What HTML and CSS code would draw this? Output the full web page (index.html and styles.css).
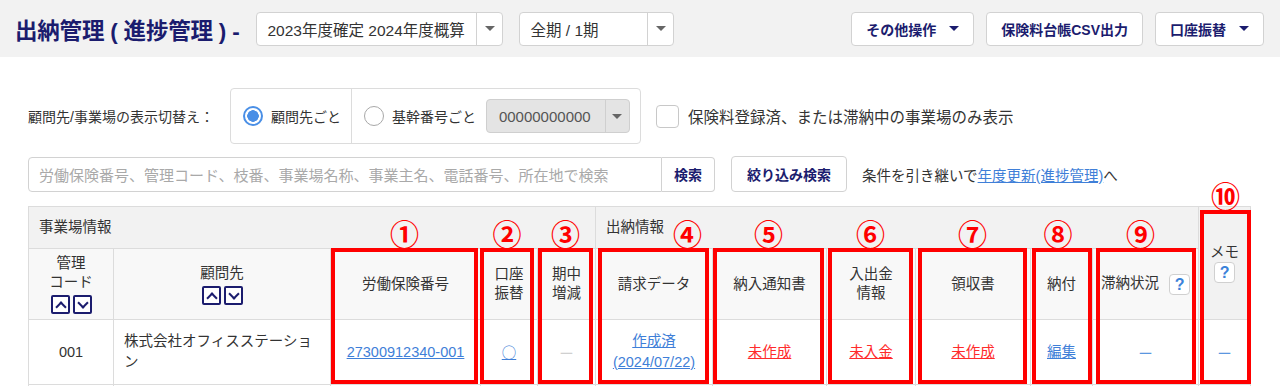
FILE: index.html
```html
<!DOCTYPE html>
<html lang="ja">
<head>
    <meta charset="UTF-8">
    <title>出納管理 (進捗管理)</title>
    <link rel="stylesheet" href="styles.css">
</head>
<body>
    <header class="topbar">
        <h1 class="page-title">出納管理 ( 進捗管理 ) -</h1>
        <div class="select year-select">
            <span class="select-text">2023年度確定 2024年度概算</span>
            <span class="select-arrow"><span class="caret"></span></span>
        </div>
        <div class="select term-select">
            <span class="select-text">全期 / 1期</span>
            <span class="select-arrow"><span class="caret"></span></span>
        </div>
        <div class="actions">
            <button class="btn">その他操作<span class="caret navy"></span></button>
            <button class="btn">保険料台帳CSV出力</button>
            <button class="btn">口座振替<span class="caret navy"></span></button>
        </div>
    </header>

    <main class="content">
        <div class="filter-row">
            <span class="filter-label">顧問先/事業場の表示切替え：</span>
            <div class="radio-box">
                <label class="radio-seg"><span class="radio checked"></span>顧問先ごと</label>
                <label class="radio-seg">
                    <span class="radio"></span>基幹番号ごと
                    <span class="select gray-select">
                        <span class="select-text">00000000000</span>
                        <span class="select-arrow"><span class="caret"></span></span>
                    </span>
                </label>
            </div>
            <label class="check"><span class="checkbox"></span>保険料登録済、または滞納中の事業場のみ表示</label>
        </div>

        <div class="search-row">
            <div class="search-group">
                <span class="search-input">労働保険番号、管理コード、枝番、事業場名称、事業主名、電話番号、所在地で検索</span>
                <button class="btn search-btn">検索</button>
            </div>
            <button class="btn narrow-btn">絞り込み検索</button>
            <span class="carry-text">条件を引き継いで<a href="#" class="link">年度更新(進捗管理)</a>へ</span>
        </div>

        <div class="table-wrap">
            <table class="grid">
                <colgroup>
                    <col class="w85"><col class="w217"><col class="w150"><col class="w57"><col class="w58">
                    <col class="w117"><col class="w114"><col class="w89"><col class="w115"><col class="w62">
                    <col class="w106"><col class="w52">
                </colgroup>
                <tr class="group-row">
                    <th colspan="5" class="group">事業場情報</th>
                    <th colspan="6" class="group">出納情報</th>
                    <th rowspan="2" class="memo-head">メモ<br><span class="help">?</span></th>
                </tr>
                <tr class="head-row">
                    <th>管理<br>コード<br>
                        <span class="sorts"><span class="sort up"></span><span class="sort down"></span></span>
                    </th>
                    <th>顧問先<br>
                        <span class="sorts"><span class="sort up"></span><span class="sort down"></span></span>
                    </th>
                    <th>労働保険番号</th>
                    <th>口座<br>振替</th>
                    <th>期中<br>増減</th>
                    <th>請求データ</th>
                    <th>納入通知書</th>
                    <th>入出金<br>情報</th>
                    <th>領収書</th>
                    <th>納付</th>
                    <th>滞納状況<span class="help gap">?</span></th>
                </tr>
                <tr class="data-row">
                    <td>001</td>
                    <td class="left">株式会社オフィスステーション</td>
                    <td><a href="#" class="link">27300912340-001</a></td>
                    <td><a href="#" class="link cjk">○</a></td>
                    <td class="muted cjk">ー</td>
                    <td><a href="#" class="link">作成済<br>(2024/07/22)</a></td>
                    <td><a href="#" class="link red">未作成</a></td>
                    <td><a href="#" class="link red">未入金</a></td>
                    <td><a href="#" class="link red">未作成</a></td>
                    <td><a href="#" class="link">編集</a></td>
                    <td class="blue-dash cjk">ー</td>
                    <td class="blue-dash cjk">ー</td>
                </tr>
                <tr class="data-row">
                    <td></td><td></td><td></td><td></td><td></td><td></td>
                    <td></td><td></td><td></td><td></td><td></td><td></td>
                </tr>
            </table>

            <!-- 注釈の赤枠 -->
            <div class="ann ann-1"><span class="ann-num">①</span></div>
            <div class="ann ann-2"><span class="ann-num">②</span></div>
            <div class="ann ann-3"><span class="ann-num">③</span></div>
            <div class="ann ann-4"><span class="ann-num">④</span></div>
            <div class="ann ann-5"><span class="ann-num">⑤</span></div>
            <div class="ann ann-6"><span class="ann-num">⑥</span></div>
            <div class="ann ann-7"><span class="ann-num">⑦</span></div>
            <div class="ann ann-8"><span class="ann-num">⑧</span></div>
            <div class="ann ann-9"><span class="ann-num">⑨</span></div>
            <div class="ann ann-10"><span class="ann-num">⑩</span></div>
        </div>
    </main>
</body>
</html>
```

FILE: styles.css
```css
* {
    box-sizing: border-box;
}
body {
    margin: 0;
    padding: 0;
    font-family: "Liberation Sans", "Noto Sans CJK JP", sans-serif;
    font-size: 14.5px;
    color: #333;
    background-color: #fff;
}
button {
    font-family: inherit;
}
.cjk {
    font-family: "Noto Sans CJK JP", sans-serif;
}

/* header */
.topbar {
    height: 57px;
    padding: 0 16px 0 15px;
    background-color: #f2f2f2;
    display: flex;
    align-items: center;
}
.page-title {
    margin: 0 17px 0 0;
    font-size: 22.5px;
    font-weight: bold;
    color: #1b1c6e;
    letter-spacing: -0.2px;
}
.select {
    height: 34px;
    background-color: #fff;
    border: 1px solid #d2d2d2;
    border-radius: 4px;
    display: flex;
    align-items: stretch;
}
.select-text {
    flex: 1;
    display: flex;
    align-items: center;
    padding-left: 10px;
    white-space: nowrap;
}
.select-arrow {
    width: 26px;
    border-left: 1px solid #d2d2d2;
    display: flex;
    align-items: center;
    justify-content: center;
}
.caret {
    width: 0;
    height: 0;
    border-left: 5px solid transparent;
    border-right: 5px solid transparent;
    border-top: 5px solid #666;
}
.caret.navy {
    border-top-color: #1b1c6e;
    margin-left: 13px;
}
.year-select {
    width: 247px;
    font-size: 15.5px;
}
.term-select {
    width: 155px;
    margin-left: 16px;
    font-size: 15.5px;
}
.actions {
    margin-left: auto;
    display: flex;
    gap: 12px;
}
.btn {
    height: 34px;
    padding: 0 14px;
    background-color: #fff;
    border: 1px solid #d2d2d2;
    border-radius: 4px;
    color: #1b1c6e;
    font-size: 14px;
    font-weight: bold;
    display: flex;
    align-items: center;
    white-space: nowrap;
}

/* filters */
.content {
    padding: 31px 30px 0 28px;
}
.filter-row {
    display: flex;
    align-items: center;
}
.filter-label {
    font-size: 14px;
    margin-right: 16px;
}
.radio-box {
    height: 56px;
    border: 1px solid #dcdcdc;
    border-radius: 4px;
    display: flex;
}
.radio-seg {
    display: flex;
    align-items: center;
    padding: 0 10px 0 12px;
    font-size: 14px;
}
.radio-seg + .radio-seg {
    border-left: 1px solid #dcdcdc;
}
.radio {
    width: 20px;
    height: 20px;
    margin-right: 8px;
    border: 1.5px solid #a8a8a8;
    border-radius: 50%;
    background-color: #fff;
}
.radio.checked {
    border: 2px solid #4a8fe6;
    background: radial-gradient(circle, #4a8fe6 0 5.5px, #fff 6px);
}
.gray-select {
    width: 144px;
    margin-left: 10px;
    background-color: #e4e4e4;
    border-color: #cfcfcf;
    color: #555;
    font-size: 15px;
}
.gray-select .select-text {
    padding-left: 12px;
}
.gray-select .select-arrow {
    width: 24px;
    border-left-color: #cfcfcf;
}
.check {
    display: flex;
    align-items: center;
    margin-left: 15px;
    font-size: 15.5px;
}
.checkbox {
    width: 23px;
    height: 23px;
    margin-right: 9px;
    border: 1px solid #c8c8c8;
    border-radius: 4px;
}

/* search */
.search-row {
    display: flex;
    align-items: center;
    margin-top: 12px;
}
.search-group {
    display: flex;
}
.search-input {
    width: 634px;
    height: 35px;
    padding-left: 10px;
    border: 1px solid #d2d2d2;
    border-radius: 4px 0 0 4px;
    color: #a9a9a9;
    font-size: 15px;
    display: flex;
    align-items: center;
}
.search-btn {
    height: 35px;
    width: 53px;
    padding: 0;
    justify-content: center;
    border-left: none;
    border-radius: 0 4px 4px 0;
}
.narrow-btn {
    height: 36px;
    margin-left: 16px;
    padding: 0 15px;
}
.carry-text {
    margin-left: 15px;
    font-size: 14.5px;
}
.link {
    color: #3f7fd8;
    text-decoration: underline;
}
.link.red {
    color: #ff2b2b;
}

/* table */
.table-wrap {
    position: relative;
    margin-top: 14px;
}
.grid {
    width: 1222px;
    table-layout: fixed;
    border-collapse: collapse;
}
.w85 { width: 85px; }
.w217 { width: 217px; }
.w150 { width: 150px; }
.w57 { width: 57px; }
.w58 { width: 58px; }
.w117 { width: 117px; }
.w114 { width: 114px; }
.w89 { width: 89px; }
.w115 { width: 115px; }
.w62 { width: 62px; }
.w106 { width: 106px; }
.w52 { width: 52px; }
.grid th,
.grid td {
    border: 1px solid #dcdcdc;
    text-align: center;
    vertical-align: middle;
    padding: 0 4px;
}
.grid th {
    font-weight: normal;
    line-height: 19px;
}
.group-row {
    height: 42px;
}
.group-row th {
    background-color: #f2f2f2;
}
.grid th.group {
    text-align: left;
    padding-left: 10px;
}
.memo-head {
    line-height: 22px;
}
.head-row {
    height: 71px;
}
.head-row th {
    background-color: #f8f8f8;
}
.data-row {
    height: 65px;
}
.data-row td {
    line-height: 21px;
}
.grid td.left {
    text-align: left;
    padding: 0 10px;
}
.muted {
    color: #d0d0d0;
}
.blue-dash {
    color: #5b97e0;
}
.sorts {
    display: inline-flex;
    gap: 3px;
    margin-top: 3px;
    vertical-align: top;
}
.sort {
    width: 19px;
    height: 19px;
    border: 2px solid #1b1c6e;
    border-radius: 2px;
    background-color: #fff;
    position: relative;
}
.sort::after {
    content: "";
    position: absolute;
    left: 4px;
    width: 6px;
    height: 6px;
    border-left: 2.5px solid #1b1c6e;
    border-top: 2.5px solid #1b1c6e;
}
.sort.up::after {
    top: 6px;
    transform: rotate(45deg);
}
.sort.down::after {
    top: 2px;
    transform: rotate(225deg);
}
.help {
    display: inline-flex;
    align-items: center;
    justify-content: center;
    width: 21px;
    height: 21px;
    border: 1px solid #d0d0d0;
    border-radius: 4px;
    background-color: #fff;
    color: #3b82d9;
    font-weight: bold;
    font-size: 16px;
    vertical-align: middle;
}
.help.gap {
    margin-left: 10px;
}

/* annotations */
.ann {
    position: absolute;
    top: 42px;
    height: 136px;
    border: 4px solid #ff0000;
}
.ann-num {
    position: absolute;
    left: -10px;
    right: -10px;
    bottom: 100%;
    margin-bottom: 3px;
    text-align: center;
    color: #ff0000;
    font-family: "Noto Sans CJK JP", sans-serif;
    font-size: 29px;
    font-weight: bold;
    line-height: 32px;
}
.ann-1 { left: 303px; width: 147px; }
.ann-2 { left: 452px; width: 54px; }
.ann-3 { left: 510px; width: 55px; }
.ann-4 { left: 570px; width: 111px; }
.ann-4 .ann-num { left: 24px; right: -44px; }
.ann-5 { left: 685px; width: 111px; }
.ann-6 { left: 800px; width: 85px; }
.ann-7 { left: 890px; width: 109px; }
.ann-8 { left: 1004px; width: 60px; }
.ann-8 .ann-num { left: -14px; right: -6px; }
.ann-9 { left: 1068px; width: 100px; }
.ann-9 .ann-num { left: -20px; right: -9px; }
.ann-10 { left: 1172px; width: 51px; top: 4px; height: 174px; }
```
